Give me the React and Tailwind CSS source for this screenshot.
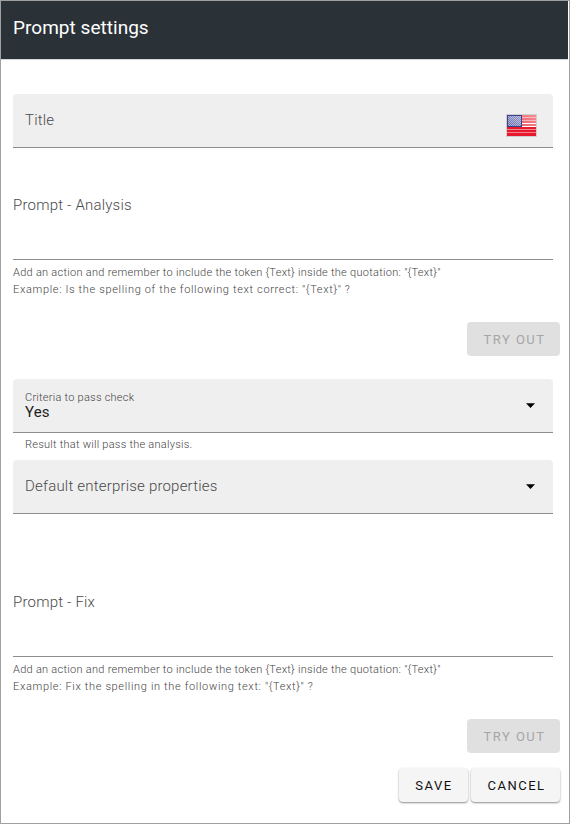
import React from "react";

function Flag() {
  return (
    <svg className="h-6 w-8" viewBox="0 0 32 24" shapeRendering="crispEdges" aria-label="English (US)">
      <defs>
        <pattern id="stars" width="2" height="2" patternUnits="userSpaceOnUse">
          <rect width="2" height="2" fill="#6a6fae" />
          <rect width="1" height="1" fill="#a4a8d2" />
          <rect x="1" y="1" width="1" height="1" fill="#a4a8d2" />
        </pattern>
        <linearGradient id="gloss" x1="0" y1="1" x2="1" y2="0">
          <stop offset="0" stopColor="#fff" stopOpacity="0" />
          <stop offset="1" stopColor="#fff" stopOpacity="0.3" />
        </linearGradient>
      </defs>
      <rect x="1" y="1" width="31" height="23" rx="1" fill="#d0d0d0" />
      <rect x="2" y="2" width="29" height="21" fill="#f6a6ad" />
      {[2, 5, 8, 11].map((y) => (
        <rect key={y} x="2" y={y} width="29" height="2" fill="#ee5f6b" />
      ))}
      <rect x="2" y="10" width="29" height="1" fill="#fff" />
      <rect x="2" y="13" width="29" height="1" fill="#fff" />
      {[14, 17, 20].map((y) => (
        <rect key={y} x="2" y={y} width="29" height="2" fill="#e8182c" />
      ))}
      {[16, 19].map((y) => (
        <rect key={y} x="2" y={y} width="29" height="1" fill="#f5838d" />
      ))}
      <rect x="2" y="22" width="29" height="1" fill="#e8182c" />
      <rect x="16" y="2" width="15" height="11" fill="url(#gloss)" />
      <rect x="2" y="2" width="15" height="12" fill="#3a3f90" />
      <rect x="3" y="3" width="13" height="10" fill="url(#stars)" />
      <rect x="3" y="3" width="13" height="10" fill="url(#gloss)" />
    </svg>
  );
}

function Arrow() {
  return (
    <svg className="h-[5px] w-[10px]" viewBox="0 0 10 5">
      <path d="M0 0.2h9L4.5 4.9z" fill="#000" />
    </svg>
  );
}

function TryOut() {
  return (
    <div className="flex h-[34px] justify-end pr-[9px]">
      <button className="w-[93px] rounded-[4px] bg-[#e0e0e0] pl-[2px] pt-px text-[13px] tracking-[1.5px] text-[#a6a6a6]">TRY OUT</button>
    </div>
  );
}

function PromptField({ label, example, exampleClass }) {
  return (
    <div className="px-3 pr-4">
      <div className="h-[64px] border-b border-[#8d8d8d] text-[15px] font-light leading-[18px] tracking-[0.2px] text-[#4a4a4a]">
        {label}
      </div>
      <div className="pt-[4px] text-[11px] font-light leading-[17px] text-[#444]">
        <p className="tracking-[0.28px]">
          Add an action and remember to include the token {"{Text}"} inside the quotation: "{"{Text}"}"
        </p>
        <p className={exampleClass}>{example}</p>
      </div>
    </div>
  );
}

export default function App() {
  return (
    <div className="flex h-[824px] w-[570px] flex-col border border-[#a0a0a0] bg-white font-[Roboto,sans-serif]">
      <header className="mr-px h-[58px] shrink-0 bg-[#2a3238] pl-3 pt-[15px] shadow-[0_1px_0_#d5d8da]">
        <h1 className="text-[19px] font-[450] leading-6 tracking-[0.03px] text-white">Prompt settings</h1>
      </header>

      <div className="ml-3 mr-4 mt-[35px] flex h-[54px] shrink-0 justify-between rounded-t-[4px] border-b border-[#8d8d8d] bg-[#efefef] pl-3 pr-4">
        <span className="pt-[17px] text-[15px] font-light leading-[18px] tracking-[0.2px] text-[#4a4a4a]">Title</span>
        <span className="pt-[19px]"><Flag /></span>
      </div>

      <div className="mt-[48px]">
        <PromptField
          label="Prompt - Analysis"
          example={'Example: Is the spelling of the following text correct: "{Text}" ?'}
          exampleClass="tracking-[0.66px]"
        />
      </div>
      <div className="mt-[24px]"><TryOut /></div>

      <div className="ml-3 mr-4 mt-[23px] flex h-[54px] shrink-0 items-center justify-between rounded-t-[4px] border-b border-[#8d8d8d] bg-[#efefef] pl-3 pr-[17px]">
        <div className="flex flex-col">
          <span className="text-[11px] font-light leading-[14px] tracking-[0.25px] text-[#444]">Criteria to pass check</span>
          <span className="-mt-px mb-px text-[15px] leading-[16px] tracking-[0.1px] text-[#222]">Yes</span>
        </div>
        <Arrow />
      </div>
      <p className="ml-6 mt-[3px] h-[24px] text-[11px] font-light leading-[17px] tracking-[0.25px] text-[#444]">
        Result that will pass the analysis.
      </p>

      <div className="ml-3 mr-4 flex h-[54px] shrink-0 items-center justify-between rounded-t-[4px] border-b border-[#8d8d8d] bg-[#efefef] pl-3 pr-[17px]">
        <span className="-mt-[2px] text-[15px] font-light leading-[18px] tracking-[0.2px] text-[#4a4a4a]">Default enterprise properties</span>
        <Arrow />
      </div>

      <div className="mt-[79px]">
        <PromptField
          label="Prompt - Fix"
          example={'Example: Fix the spelling in the following text: "{Text}" ?'}
          exampleClass="tracking-[0.66px]"
        />
      </div>
      <div className="mt-[24px]"><TryOut /></div>

      <div className="mt-[15px] flex h-[34px] justify-end gap-[3px] pr-[9px] text-[13px] font-[450] tracking-[1.5px] text-[#111]">
        <button className="w-[69px] rounded-[4px] bg-[#f5f5f5] pl-[1px] pt-px shadow-[0_1px_2px_rgba(0,0,0,0.45)]">SAVE</button>
        <button className="w-[89px] rounded-[4px] bg-[#f5f5f5] pl-[2px] pt-px shadow-[0_1px_2px_rgba(0,0,0,0.45)]">CANCEL</button>
      </div>
    </div>
  );
}
